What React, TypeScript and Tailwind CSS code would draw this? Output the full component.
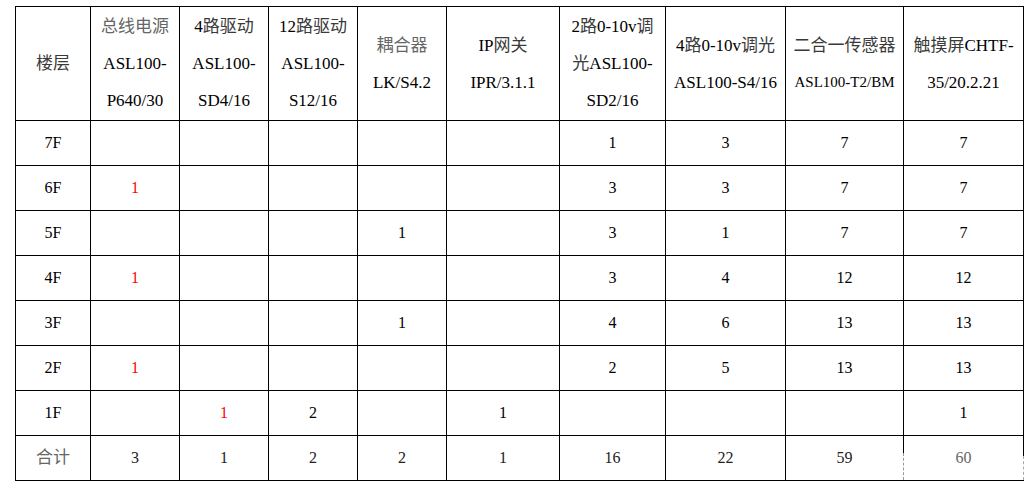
import { Fragment } from "react";

type Head = {
  lines: string[];
  gray?: boolean;
};

type Cell = string | { v: string; red?: boolean };

const heads: Head[] = [
  { lines: ["楼层"] },
  { lines: ["总线电源", "ASL100-", "P640/30"], gray: true },
  { lines: ["4路驱动", "ASL100-", "SD4/16"] },
  { lines: ["12路驱动", "ASL100-", "S12/16"] },
  { lines: ["耦合器", "LK/S4.2"], gray: true },
  { lines: ["IP网关", "IPR/3.1.1"] },
  { lines: ["2路0-10v调", "光ASL100-", "SD2/16"] },
  { lines: ["4路0-10v调光", "ASL100-S4/16"] },
  { lines: ["二合一传感器", "ASL100-T2/BM"] },
  { lines: ["触摸屏CHTF-", "35/20.2.21"] },
];

const red = (v: string): Cell => ({ v, red: true });

const rows: Cell[][] = [
  ["7F", "", "", "", "", "", "1", "3", "7", "7"],
  ["6F", red("1"), "", "", "", "", "3", "3", "7", "7"],
  ["5F", "", "", "", "1", "", "3", "1", "7", "7"],
  ["4F", red("1"), "", "", "", "", "3", "4", "12", "12"],
  ["3F", "", "", "", "1", "", "4", "6", "13", "13"],
  ["2F", red("1"), "", "", "", "", "2", "5", "13", "13"],
  ["1F", "", red("1"), "2", "", "1", "", "", "", "1"],
];

const totals = ["合计", "3", "1", "2", "2", "1", "16", "22", "59", "60"];

// chinese glyphs come out heavier than the thin original, soften them a bit
function Mixed({ text, gray }: { text: string; gray?: boolean }) {
  const parts = text.split(/([\u4e00-\u9fff]+)/).filter(Boolean);
  return (
    <>
      {parts.map((p, i) =>
        /[\u4e00-\u9fff]/.test(p) ? (
          <span key={i} className={gray ? "text-[#666]" : "text-[#3a3a3a]"}>
            {p}
          </span>
        ) : (
          <span key={i}>{p}</span>
        )
      )}
    </>
  );
}

function HeadCell({ head }: { head: Head }) {
  return (
    <div className="bg-white flex flex-col items-center justify-center text-[17px] leading-[37px] whitespace-nowrap text-black">
      {head.lines.map((l, i) => (
        <div key={i} className={l === "ASL100-T2/BM" ? "text-[15px]" : ""}>
          <Mixed text={l} gray={head.gray && i === 0} />
        </div>
      ))}
    </div>
  );
}

function DataCell({ cell }: { cell: Cell }) {
  const v = typeof cell === "string" ? cell : cell.v;
  const isRed = typeof cell !== "string" && cell.red;
  return (
    <div
      className={
        "bg-white flex items-center justify-center text-[16px] " +
        (isRed ? "text-[#ff0000]" : "text-black")
      }
    >
      {v}
    </div>
  );
}

export default function App() {
  return (
    <div className="w-[1032px] h-[484px] bg-white pt-[6px] pl-[15px] font-['Liberation_Serif','Noto_Sans_CJK_SC',serif]">
      <div className="inline-grid grid-cols-[74px_88px_88px_88px_88px_112px_105px_119px_117px_119px] grid-rows-[113px_repeat(8,44px)] gap-px p-px bg-black">
        {heads.map((h, i) => (
          <HeadCell key={i} head={h} />
        ))}
        {rows.map((r, ri) => (
          <Fragment key={ri}>
            {r.map((c, ci) => (
              <DataCell key={ci} cell={c} />
            ))}
          </Fragment>
        ))}
        {totals.map((t, i) => (
          <div
            key={i}
            className={
              "bg-white flex items-center justify-center text-[16px] " +
              (i === 0
                ? "text-[17px] text-[#666]"
                : i === 9
                  ? "text-[#666] relative"
                  : "text-[#222]")
            }
          >
            {i === 9 && (
              <>
                <span className="absolute left-[-1px] top-[17px] bottom-0 w-px bg-white border-l border-dashed border-[#999]" />
                <span className="absolute right-[-1px] top-[20px] bottom-0 w-px bg-white border-l border-dashed border-[#aaa]" />
              </>
            )}
            {t}
          </div>
        ))}
      </div>
    </div>
  );
}
